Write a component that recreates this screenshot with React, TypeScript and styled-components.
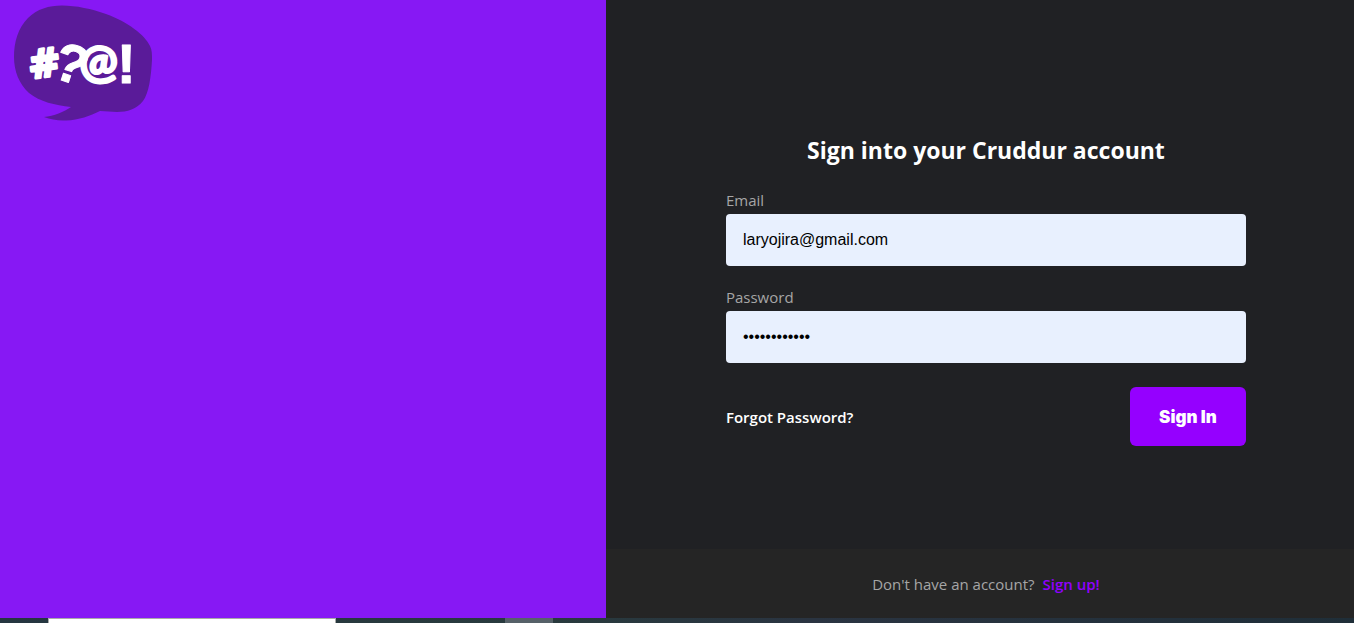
import React from "react";
import styled, { createGlobalStyle } from "styled-components";

const GlobalStyle = createGlobalStyle`
  * { box-sizing: border-box; }
  html, body { margin: 0; padding: 0; }
  body {
    background: #202124;
    font-family: "Segoe UI", "Open Sans", "Noto Sans", sans-serif;
  }
`;

const Screen = styled.div`
  display: flex;
  flex-direction: column;
  min-height: 100vh;
`;

const Page = styled.div`
  display: grid;
  grid-template-columns: 81fr 100fr;
  flex: 1;
`;

const BrandPane = styled.aside`
  min-width: 0;
  padding: 4px 12px;
  background: #8718f4;
`;

const Logo = styled.svg`
  display: block;
  width: 142px;
  height: 118px;
`;

const AuthPane = styled.div`
  min-width: 0;
  display: flex;
  flex-direction: column;
  background: #202124;
`;

const AuthMain = styled.main`
  flex: 1;
  display: flex;
  align-items: center;
  justify-content: center;
  padding: 0 12px 0 24px;
`;

const Form = styled.form`
  display: flex;
  flex-direction: column;
  gap: 24px;
  width: 100%;
  max-width: 520px;
  padding-top: 34px;
`;

const Title = styled.h1`
  margin: 0;
  color: #fff;
  font-size: 23px;
  font-weight: 700;
  line-height: 26px;
  padding-bottom: 6px;
  text-align: center;
`;

const Field = styled.div`
  display: flex;
  flex-direction: column;
  gap: 6px;
`;

const Label = styled.label`
  color: #a6a6a6;
  font-size: 15px;
  line-height: 15px;
`;

const TextInput = styled.input`
  width: 100%;
  height: 52px;
  padding: 0 17px;
  border: 0;
  border-radius: 4px;
  outline: 0;
  background: #e8f0fe;
  color: #000;
  font-family: Arial, "Liberation Sans", sans-serif;
  font-size: 16px;
`;

const Actions = styled.div`
  display: flex;
  align-items: center;
  justify-content: space-between;
`;

const TextLink = styled.a<{ $accent?: boolean }>`
  color: ${(p) => (p.$accent ? "#9100ff" : "#fff")};
  font-size: 15px;
  font-weight: 600;
  line-height: 24px;
  text-decoration: none;
`;

const SubmitButton = styled.button`
  min-width: 116px;
  height: 59px;
  padding: 0 24px;
  border: 0;
  border-radius: 6px;
  background: #9500ff;
  color: #fff;
  font-family: "Arial Black", Inter, sans-serif;
  font-size: 17px;
  font-weight: 900;
  cursor: pointer;
`;

const Footer = styled.footer`
  display: flex;
  align-items: center;
  justify-content: center;
  gap: 8px;
  height: 69px;
  padding: 0 12px 0 24px;
  background: #252525;
  color: #a6a6a6;
  font-size: 15px;
  line-height: 24px;
`;

const Taskbar = styled.div`
  display: flex;
  height: 5px;
  padding-left: 48px;
  overflow: hidden;
  background: linear-gradient(90deg, #253640, #283a3d 40%, #2a3441 60%, #1f2e38);
`;

const TaskbarSearch = styled.div`
  width: 288px;
  margin-right: 169px;
  border: 1px solid #aaa;
  border-bottom: 0;
  background: #fff;
`;

const TaskbarApp = styled.div`
  width: 48px;
  background: #566168;
`;

const LogoText = styled.text`
  fill: #fff;
  stroke: #fff;
  stroke-linejoin: round;
  font-family: "Liberation Sans", sans-serif;
  font-weight: 700;
`;

const LogoHash = styled(LogoText)`
  font-family: "DejaVu Sans", sans-serif;
`;

const LogoAt = styled(LogoText)`
  font-family: Lato, sans-serif;
  font-weight: 900;
`;

const CruddurLogo = () => (
  <Logo viewBox="12 4 142 118" role="img" aria-label="Cruddur">
    <path
      fill="#5a1b99"
      d="M62 5.500C76 5.500 92 9 106 14C128 22 145 35 150 46C152 50 152 54 152 60C151 77 149 93 143 101C137 109 127 112 117 112C111 112 106 111 100 111C90 116 79 120 66 120.500C58 121 51 119.500 44 117C54 116 64 112 71 107C55 105 40 102 29 93C19 84 14 71 14 57C14 42 18 28 28 18C37 9 49 5.500 62 5.500Z"
    />
    <LogoHash fontSize="39" strokeWidth="3" transform="rotate(-7 44 63)">
      <tspan x="28" y="77">#</tspan>
    </LogoHash>
    <LogoText fontSize="54" strokeWidth="1" transform="rotate(18 70 64)">
      <tspan x="55" y="82">?</tspan>
    </LogoText>
    <LogoAt fontSize="46" strokeWidth="2" transform="rotate(-6 99 63)">
      <tspan x="79" y="78">@</tspan>
    </LogoAt>
    <LogoText fontSize="56" strokeWidth="1">
      <tspan x="117" y="83">!</tspan>
    </LogoText>
  </Logo>
);

export default function App() {
  return (
    <>
      <GlobalStyle />
      <Screen>
        <Page>
          <BrandPane>
            <CruddurLogo />
          </BrandPane>
          <AuthPane>
            <AuthMain>
              <Form onSubmit={(e) => e.preventDefault()}>
                <Title>Sign into your Cruddur account</Title>
                <Field>
                  <Label htmlFor="email">Email</Label>
                  <TextInput id="email" type="text" defaultValue="laryojira@gmail.com" />
                </Field>
                <Field>
                  <Label htmlFor="password">Password</Label>
                  <TextInput id="password" type="password" defaultValue="cruddur12345" />
                </Field>
                <Actions>
                  <TextLink href="#forgot">Forgot Password?</TextLink>
                  <SubmitButton type="submit">Sign In</SubmitButton>
                </Actions>
              </Form>
            </AuthMain>
            <Footer>
              <span>Don't have an account?</span>
              <TextLink href="#signup" $accent>Sign up!</TextLink>
            </Footer>
          </AuthPane>
        </Page>
        <Taskbar>
          <TaskbarSearch />
          <TaskbarApp />
        </Taskbar>
      </Screen>
    </>
  );
}
